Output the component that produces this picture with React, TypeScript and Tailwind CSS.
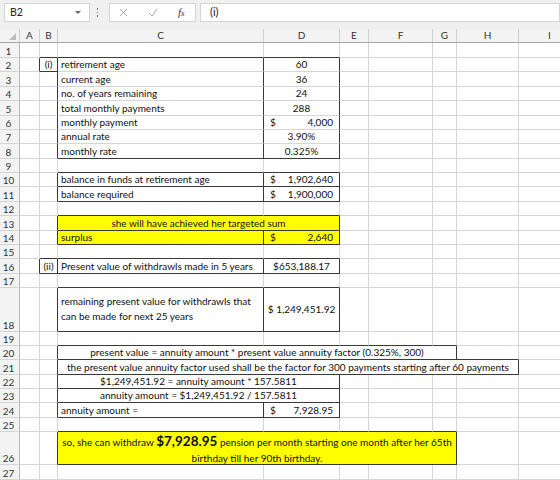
const FONT = "font-['Lato','Noto_Sans',sans-serif]";

const LETTERS = ["A", "B", "C", "D", "E", "F", "G", "H", "I"];
const WIDTHS = ["w-[20px]", "w-[18px]", "w-[206px]", "w-[76px]", "w-[29px]", "w-[64px]", "w-[24px]", "w-[62px]", "w-[62px]"];

type Box = { r1: number; r2: number; c1: number; c2: number };
type Merge = { r: number; c1: number; c2: number; w: string };

// bordered ranges, columns counted from A = 0
const boxes: Box[] = [
  { r1: 2, r2: 2, c1: 1, c2: 1 },
  { r1: 2, r2: 8, c1: 2, c2: 2 },
  { r1: 2, r2: 8, c1: 3, c2: 3 },
  { r1: 10, r2: 10, c1: 2, c2: 2 },
  { r1: 10, r2: 10, c1: 3, c2: 3 },
  { r1: 11, r2: 11, c1: 2, c2: 2 },
  { r1: 11, r2: 11, c1: 3, c2: 3 },
  { r1: 13, r2: 13, c1: 2, c2: 3 },
  { r1: 14, r2: 14, c1: 2, c2: 2 },
  { r1: 14, r2: 14, c1: 3, c2: 3 },
  { r1: 16, r2: 16, c1: 1, c2: 1 },
  { r1: 16, r2: 16, c1: 2, c2: 2 },
  { r1: 16, r2: 16, c1: 3, c2: 3 },
  { r1: 18, r2: 18, c1: 2, c2: 2 },
  { r1: 18, r2: 18, c1: 3, c2: 3 },
  { r1: 20, r2: 20, c1: 2, c2: 6 },
  { r1: 21, r2: 21, c1: 2, c2: 7 },
  { r1: 22, r2: 22, c1: 2, c2: 3 },
  { r1: 23, r2: 23, c1: 2, c2: 3 },
  { r1: 24, r2: 24, c1: 2, c2: 2 },
  { r1: 24, r2: 24, c1: 3, c2: 3 },
  { r1: 26, r2: 26, c1: 2, c2: 6 },
];

const merges: Merge[] = [
  { r: 13, c1: 2, c2: 3, w: "w-[282px]" },
  { r: 20, c1: 2, c2: 6, w: "w-[399px]" },
  { r: 21, c1: 2, c2: 7, w: "w-[461px]" },
  { r: 22, c1: 2, c2: 3, w: "w-[282px]" },
  { r: 23, c1: 2, c2: 3, w: "w-[282px]" },
  { r: 26, c1: 2, c2: 6, w: "w-[399px]" },
];

const yellow = ["13,2", "14,2", "14,3", "26,2"];

function Acct({ v }: { v: string }) {
  return (
    <div className="flex w-full justify-between pl-[6px] pr-[6px]">
      <span>$</span>
      <span>{v}</span>
    </div>
  );
}

const left = (t: string) => <div className="pl-[3px] whitespace-nowrap">{t}</div>;
const mid = (t: string) => <div className="w-full text-center whitespace-nowrap">{t}</div>;

const cells: Record<string, React.ReactNode> = {
  "2,1": mid("(i)"),
  "2,2": left("retirement age"),
  "3,2": left("current age"),
  "4,2": left("no. of years remaining"),
  "5,2": left("total monthly payments"),
  "6,2": left("monthly payment"),
  "7,2": left("annual rate"),
  "8,2": left("monthly rate"),
  "2,3": mid("60"),
  "3,3": mid("36"),
  "4,3": mid("24"),
  "5,3": mid("288"),
  "6,3": <Acct v="4,000" />,
  "7,3": mid("3.90%"),
  "8,3": mid("0.325%"),
  "10,2": left("balance in funds at retirement age"),
  "11,2": left("balance required"),
  "10,3": <Acct v="1,902,640" />,
  "11,3": <Acct v="1,900,000" />,
  "13,2": mid("she will have achieved her targeted sum"),
  "14,2": left("surplus"),
  "14,3": <Acct v="2,640" />,
  "16,1": mid("(ii)"),
  "16,2": left("Present value of withdrawls made in 5 years"),
  "16,3": mid("$653,188.17"),
  "18,2": (
    <div className="self-center pl-[3px] leading-[15px]">
      remaining present value for withdrawls that
      <br />
      can be made for next 25 years
    </div>
  ),
  "18,3": <div className="self-center w-full text-center">$ 1,249,451.92</div>,
  "20,2": mid("present value = annuity amount * present value annuity factor (0.325%, 300)"),
  "21,2": mid("the present value annuity factor used shall be the factor for 300 payments starting after 60 payments"),
  "22,2": mid("$1,249,451.92 = annuity amount * 157.5811"),
  "23,2": mid("annuity amount = $1,249,451.92 / 157.5811"),
  "24,2": left("annuity amount ="),
  "24,3": <Acct v="7,928.95" />,
  "26,2": (
    <div className="self-center w-full pt-[4px] text-center leading-[16px]">
      so, she can withdraw <b className="text-[13.5px] font-bold">$7,928.95</b> pension per month starting one month after her 65th
      <br />
      birthday till her 90th birthday.
    </div>
  ),
};

function rowHeight(r: number) {
  if (r === 1) return "h-[15px]";
  if (r === 18) return "h-[43.5px]";
  if (r === 26) return "h-[33px]";
  return "h-[14.375px]";
}

function darkRight(r: number, c: number) {
  return boxes.some((b) => r >= b.r1 && r <= b.r2 && (b.c2 === c || b.c1 === c + 1));
}

function darkBottom(r: number, c1: number, c2: number) {
  return boxes.some((b) => (b.r2 === r || b.r1 === r + 1) && b.c1 <= c2 && b.c2 >= c1);
}

function SheetRow({ r }: { r: number }) {
  const out: React.ReactNode[] = [];
  let c = 0;
  while (c < 9) {
    const m = merges.find((x) => x.r === r && x.c1 === c);
    const c2 = m ? m.c2 : c;
    const key = `${r},${c}`;
    const fill = yellow.includes(key);
    out.push(
      <div
        key={key}
        className={[
          "flex shrink-0 items-end overflow-hidden border-r border-b pb-[1px] leading-[12px]",
          m ? m.w : WIDTHS[c],
          darkRight(r, c2) ? "border-r-[#3a3a3a]" : "border-r-[#d6d6d6]",
          darkBottom(r, c, c2) ? "border-b-[#3a3a3a]" : "border-b-[#d6d6d6]",
          fill ? "bg-[#ffff00]" : "bg-white",
        ].join(" ")}
      >
        {cells[key]}
      </div>
    );
    c = c2 + 1;
  }
  return (
    <div className={`flex ${rowHeight(r)}`}>
      <div className="flex w-[20px] shrink-0 items-end justify-center border-r border-b border-r-[#b8b8b8] border-b-[#d4d4d4] bg-[#f3f3f3] pr-[2px] text-[10px] leading-[12px] text-[#333]">
        {r}
      </div>
      {out}
    </div>
  );
}

export default function App() {
  const rows = Array.from({ length: 27 }, (_, i) => i + 1);
  return (
    <div className={`w-[560px] h-[480px] overflow-hidden bg-white text-[10px] text-[#111] ${FONT}`}>
      {/* formula bar */}
      <div className="flex h-[29px] items-start bg-[#f0f0f0] pt-[3px]">
        <div className="ml-[4px] flex h-[19px] w-[86px] items-center justify-between border border-[#d4d4d4] bg-white pl-[5px] pr-[8px] text-[10.5px] text-[#222]">
          <span>B2</span>
          <span className="h-0 w-0 border-x-[3px] border-t-[3px] border-x-transparent border-t-[#666]" />
        </div>
        <div className="ml-[6px] flex h-[19px] w-[3px] flex-col items-center justify-center gap-[2px]">
          <span className="h-[1.5px] w-[1.5px] bg-[#777]" />
          <span className="h-[1.5px] w-[1.5px] bg-[#777]" />
          <span className="h-[1.5px] w-[1.5px] bg-[#777]" />
        </div>
        <div className="ml-[10px] flex h-[19px] w-[87px] items-center border border-[#d4d4d4] bg-white">
          <svg className="ml-[9px]" width="9" height="9" viewBox="0 0 9 9">
            <path d="M1 1 8 8M8 1 1 8" stroke="#a8a8a8" strokeWidth="1" fill="none" />
          </svg>
          <svg className="ml-[20px]" width="10" height="9" viewBox="0 0 10 9">
            <path d="M1 5 4 8 9 1" stroke="#a8a8a8" strokeWidth="1" fill="none" />
          </svg>
          <span className="ml-[20px] font-['Liberation_Serif',serif] text-[11px] italic text-[#333]">
            f<span className="text-[8px]">x</span>
          </span>
        </div>
        <div className="ml-[4px] flex h-[19px] flex-1 items-center border border-[#d4d4d4] bg-white pl-[9px] text-[11px] text-[#222]">
          (i)
        </div>
      </div>

      {/* column headers */}
      <div className="flex h-[14px] border-b border-[#a8a8a8] bg-[#f3f3f3] text-[10px] leading-[13px] text-[#333]">
        <div className="relative w-[20px] shrink-0 border-r border-[#d0d0d0]">
          <span className="absolute bottom-[2px] right-[3px] h-0 w-0 border-l-[7px] border-t-[7px] border-l-transparent border-t-transparent border-b-0 border-r-0 [border-bottom:7px_solid_#bdbdbd]" />
        </div>
        {LETTERS.map((l, i) => (
          <div key={l} className={`${WIDTHS[i]} shrink-0 border-r border-[#d0d0d0] text-center`}>
            {l}
          </div>
        ))}
      </div>

      {rows.map((r) => (
        <SheetRow key={r} r={r} />
      ))}
    </div>
  );
}
